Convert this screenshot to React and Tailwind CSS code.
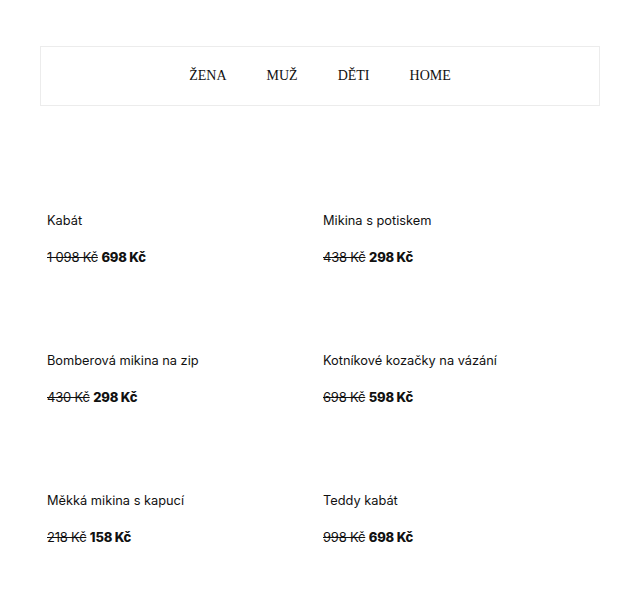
const products = [
  { name: "Kabát", oldPrice: "1 098 Kč", price: "698 Kč" },
  { name: "Mikina s potiskem", oldPrice: "438 Kč", price: "298 Kč" },
  { name: "Bomberová mikina na zip", oldPrice: "430 Kč", price: "298 Kč" },
  { name: "Kotníkové kozačky na vázání", oldPrice: "698 Kč", price: "598 Kč" },
  { name: "Měkká mikina s kapucí", oldPrice: "218 Kč", price: "158 Kč" },
  { name: "Teddy kabát", oldPrice: "998 Kč", price: "698 Kč" },
];

export default function App() {
  return (
    <div className="w-[640px] h-[600px] bg-white px-10 pt-[46px]">
      {/* nav */}
      <nav className="h-[60px] border border-[#ececec] flex items-center justify-center gap-10 pb-[2px] font-['Liberation_Serif',serif] text-[14px] text-[#111]">
        <span>ŽENA</span>
        <span>MUŽ</span>
        <span>DĚTI</span>
        <span>HOME</span>
      </nav>

      {/* products */}
      <div className="grid grid-cols-[276px_276px] gap-y-[84px] pl-[7px] pt-[105px] font-['Inter',sans-serif] text-[#111]">
        {products.map((p, i) => (
          <div key={i} className="flex flex-col">
            <p className="leading-5 text-[12.8px]">{p.name}</p>
            <p className="leading-5 mt-[16px] text-[13px] tracking-[-0.2px]">
              <span className="line-through">{p.oldPrice}</span>{" "}
              <span className="font-extrabold">{p.price}</span>
            </p>
          </div>
        ))}
      </div>
    </div>
  );
}
